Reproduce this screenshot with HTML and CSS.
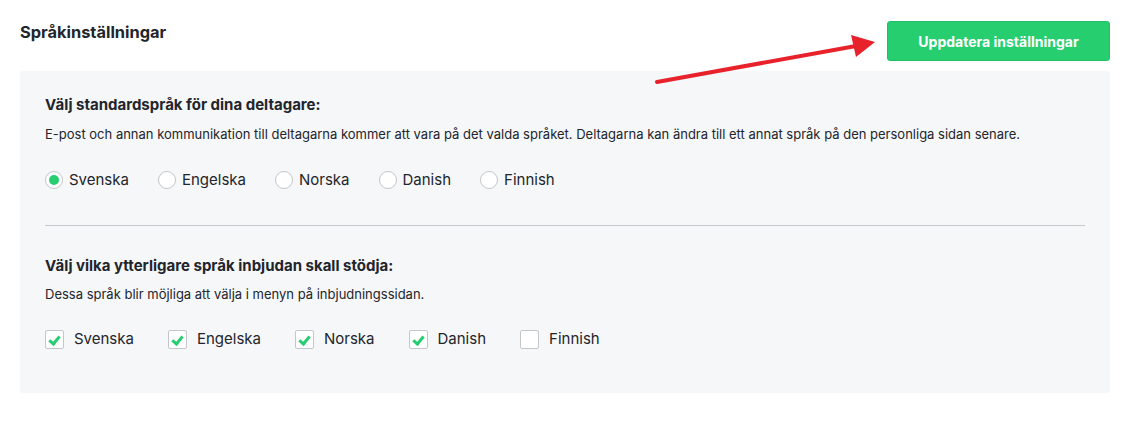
FILE: index.html
```html
<!DOCTYPE html>
<html lang="sv">

<head>
    <meta charset="UTF-8">
    <meta name="viewport" content="width=device-width, initial-scale=1.0">
    <title>Språkinställningar</title>
    <link rel="stylesheet" href="styles.css">
</head>

<body>
    <div class="page">
        <div class="header">
            <h2 class="page-title">Språkinställningar</h2>
            <button class="save-btn">Uppdatera inställningar</button>
        </div>

        <!-- Pointer arrow drawn over the page -->
        <svg class="pointer-arrow" width="240" height="70" viewBox="0 0 240 70">
            <line x1="17" y1="62" x2="216" y2="26" stroke="#e8222b" stroke-width="4" stroke-linecap="round" />
            <polygon points="235,22 211,15 216,37" fill="#e8222b" />
        </svg>

        <div class="panel">
            <h3 class="section-title">Välj standardspråk för dina deltagare:</h3>
            <p class="section-text">E-post och annan kommunikation till deltagarna kommer att vara på det valda språket. Deltagarna kan ändra till ett annat språk på den personliga sidan senare.</p>
            <div class="option-row radios">
                <label class="option"><span class="radio checked"></span>Svenska</label>
                <label class="option"><span class="radio"></span>Engelska</label>
                <label class="option"><span class="radio"></span>Norska</label>
                <label class="option"><span class="radio"></span>Danish</label>
                <label class="option"><span class="radio"></span>Finnish</label>
            </div>

            <hr class="divider">

            <h3 class="section-title second">Välj vilka ytterligare språk inbjudan skall stödja:</h3>
            <p class="section-text small-gap">Dessa språk blir möjliga att välja i menyn på inbjudningssidan.</p>
            <div class="option-row checks">
                <label class="option"><span class="checkbox checked"></span>Svenska</label>
                <label class="option"><span class="checkbox checked"></span>Engelska</label>
                <label class="option"><span class="checkbox checked"></span>Norska</label>
                <label class="option"><span class="checkbox checked"></span>Danish</label>
                <label class="option"><span class="checkbox"></span>Finnish</label>
            </div>
        </div>
    </div>
</body>

</html>
```

FILE: styles.css
```css
body {
    margin: 0;
    font-family: Inter, "Noto Sans", sans-serif;
    color: #22252b;
    background: #fff;
}

.page {
    position: relative;
    width: 1090px;
    padding: 21px 0 0 20px;
}

.header {
    display: flex;
    justify-content: space-between;
    align-items: flex-start;
}

.page-title {
    margin: 0;
    font-size: 16.4px;
    font-weight: 700;
    line-height: 20px;
    padding-top: 1px;
}

.save-btn {
    width: 223px;
    height: 40px;
    border: 1px solid #21c066;
    border-radius: 3px;
    background-color: #26ce70;
    color: #fff;
    font-family: Inter, "Noto Sans", sans-serif;
    font-size: 14px;
    font-weight: 700;
    cursor: pointer;
}

.pointer-arrow {
    position: absolute;
    left: 640px;
    top: 20px;
}

.panel {
    margin-top: 10px;
    background-color: #f6f7f9;
    border-radius: 3px;
    padding: 24px 25px 44px 25px;
}

.section-title {
    margin: 0;
    font-size: 15px;
    font-weight: 700;
    line-height: 20px;
}

.section-title.second {
    margin-top: 30px;
}

.section-text {
    margin: 10px 0 0 0;
    font-size: 13px;
    line-height: 18px;
}

.section-text.small-gap {
    margin-top: 9px;
}

.option-row {
    display: flex;
    margin-top: 27px;
    font-size: 15px;
    line-height: 20px;
}

.option-row.checks {
    margin-top: 26px;
}

.option {
    display: flex;
    align-items: center;
    cursor: pointer;
}

.radios .option {
    margin-right: 29px;
}

.checks .option {
    margin-right: 34px;
}

.radio {
    box-sizing: border-box;
    width: 18px;
    height: 18px;
    border: 1px solid #c4c6ca;
    border-radius: 50%;
    background: #fff;
    margin-right: 6px;
    display: flex;
    align-items: center;
    justify-content: center;
}

.radio.checked::after {
    content: "";
    width: 10px;
    height: 10px;
    border-radius: 50%;
    background: #26ce70;
}

.checkbox {
    box-sizing: border-box;
    position: relative;
    width: 19px;
    height: 19px;
    border: 1px solid #c4c6ca;
    border-radius: 2px;
    background: #fff;
    margin-right: 10px;
}

.checkbox.checked::after {
    content: "";
    position: absolute;
    left: 5px;
    top: 3px;
    width: 4px;
    height: 8px;
    border-right: 3px solid #26ce70;
    border-bottom: 3px solid #26ce70;
    transform: rotate(40deg);
}

.divider {
    margin: 35px 0 0 0;
    border: none;
    border-top: 1px solid #c8c9cc;
}
```
